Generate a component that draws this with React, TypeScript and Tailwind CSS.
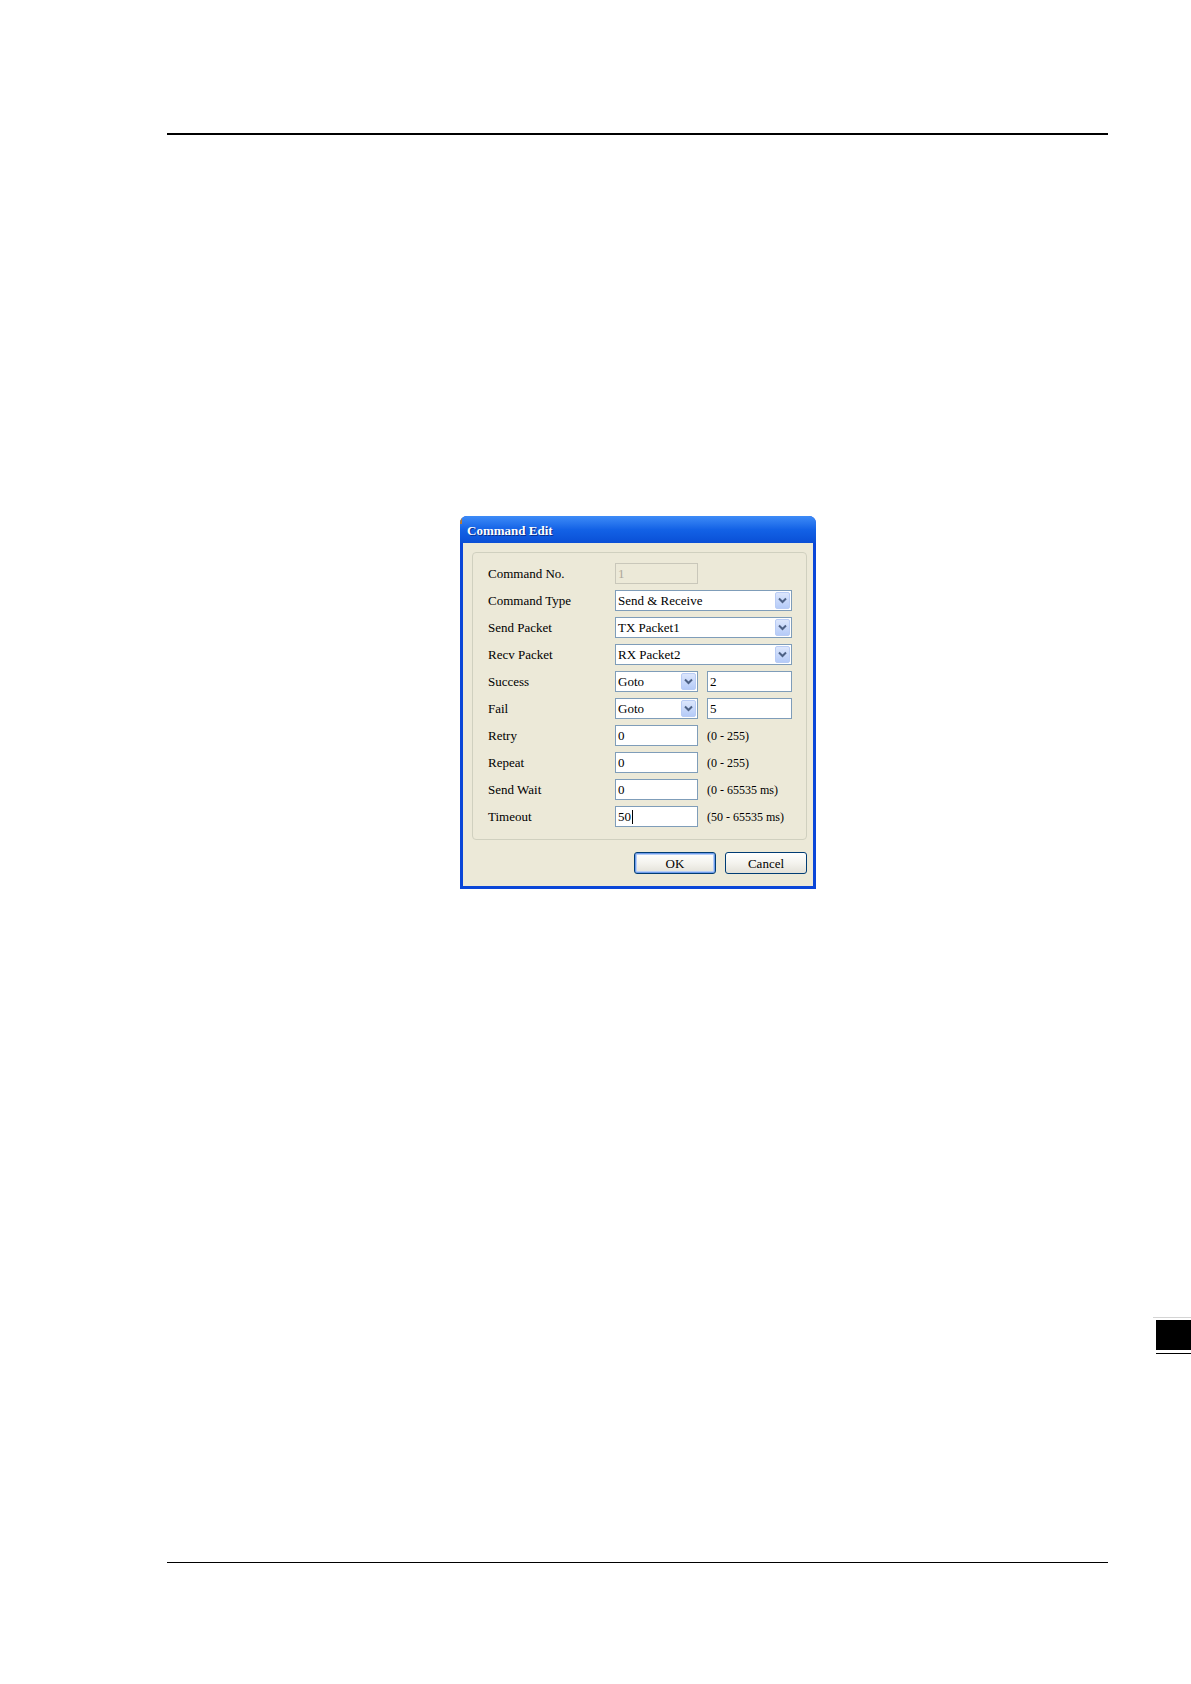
import React from "react";

const serif = { fontFamily: '"Liberation Serif", "DejaVu Serif", serif' };

function Chevron() {
  return (
    <svg width="9" height="7" viewBox="0 0 9 7">
      <path d="M1 1.5 L4.5 5 L8 1.5" fill="none" stroke="#4D6185" strokeWidth="2" />
    </svg>
  );
}

function Combo({ text, wide }: { text: string; wide?: boolean }) {
  return (
    <div
      className={`flex h-[21px] items-center border border-[#7F9DB9] bg-white ${wide ? "w-[177px]" : "w-[83px]"}`}
    >
      <span className="flex-1 pl-[2px] text-[13px] leading-none text-black">{text}</span>
      <div className="mr-[1px] flex h-[17px] w-[15px] items-center justify-center rounded-[2px] border border-[#B9CCF5] bg-gradient-to-b from-[#DCE6FC] to-[#B5CBF8]">
        <Chevron />
      </div>
    </div>
  );
}

function Input({ text, w = "w-[83px]", cursor }: { text: string; w?: string; cursor?: boolean }) {
  return (
    <div className={`flex h-[21px] items-center border border-[#7F9DB9] bg-white ${w}`}>
      <span className="pl-[2px] text-[13px] leading-none text-black">{text}</span>
      {cursor && <span className="ml-[1px] h-[14px] w-[1px] bg-black" />}
    </div>
  );
}

function Row({ label, children }: { label: string; children: React.ReactNode }) {
  return (
    <div className="flex h-[21px] items-center">
      <div className="w-[127px] text-[13px] leading-none text-black">{label}</div>
      <div className="flex items-center gap-[9px]">{children}</div>
    </div>
  );
}

function Range({ text }: { text: string }) {
  return <span className="text-[12px] leading-none text-black">{text}</span>;
}

function XPButton({ label, def }: { label: string; def?: boolean }) {
  return (
    <div
      className={`flex h-[22px] w-[82px] items-center justify-center rounded-[3px] border border-[#003C74] bg-gradient-to-b from-[#FFFFFF] via-[#F4F3EE] to-[#E3E1D8] text-[13px] leading-none text-black ${
        def ? "shadow-[inset_0_0_0_1px_#6F9CEB,inset_0_0_0_2px_#B6CEF7]" : ""
      }`}
    >
      {label}
    </div>
  );
}

export default function App() {
  return (
    <div className="relative h-[1684px] w-[1191px] overflow-hidden bg-white" style={serif}>
      <div className="pt-[133px]">
        {/* header rule */}
        <div className="ml-[167px] h-[2px] w-[941px] bg-black" />

        {/* dialog */}
        <div className="ml-[460px] mt-[381px] flex h-[373px] w-[356px] flex-col overflow-hidden rounded-t-[7px] bg-[#0A46D8]">
          {/* title bar */}
          <div className="relative flex h-[27px] items-center bg-gradient-to-b from-[#3D8BF7] via-[#1362E6] to-[#0A4FD6] pl-[7px] pt-[2px]">
            <span className="absolute left-0 top-[2px] h-[6px] w-[2px] bg-[#C07A2A]" />
            <span className="text-[13px] font-bold leading-none text-white [text-shadow:1px_1px_0_#0A2F8C]">
              Command Edit
            </span>
          </div>
          {/* body */}
          <div className="mx-[3px] mb-[3px] flex flex-1 flex-col bg-[#ECE9D8] pl-[9px] pr-[6px] pt-[9px]">
            <div className="flex h-[288px] flex-col gap-[6px] rounded-[4px] border border-[#D0D0BF] pl-[15px] pt-[10px]">
              <Row label="Command No.">
                <div className="flex h-[21px] w-[83px] items-center border border-[#C9C7BA] bg-[#ECE9D8]">
                  <span className="pl-[2px] text-[13px] leading-none text-[#ACA899]">1</span>
                </div>
              </Row>
              <Row label="Command Type">
                <Combo text="Send & Receive" wide />
              </Row>
              <Row label="Send Packet">
                <Combo text="TX Packet1" wide />
              </Row>
              <Row label="Recv Packet">
                <Combo text="RX Packet2" wide />
              </Row>
              <Row label="Success">
                <Combo text="Goto" />
                <Input text="2" w="w-[85px]" />
              </Row>
              <Row label="Fail">
                <Combo text="Goto" />
                <Input text="5" w="w-[85px]" />
              </Row>
              <Row label="Retry">
                <Input text="0" />
                <Range text="(0 - 255)" />
              </Row>
              <Row label="Repeat">
                <Input text="0" />
                <Range text="(0 - 255)" />
              </Row>
              <Row label="Send Wait">
                <Input text="0" />
                <Range text="(0 - 65535 ms)" />
              </Row>
              <Row label="Timeout">
                <Input text="50" cursor />
                <Range text="(50 - 65535 ms)" />
              </Row>
            </div>
            <div className="mt-[12px] flex justify-end gap-[9px]">
              <XPButton label="OK" def />
              <XPButton label="Cancel" />
            </div>
          </div>
        </div>

        {/* side tab */}
        <div className="mt-[428px] flex flex-col items-end">
          <div className="h-[1px] w-[38px] bg-[#D4D4D4]" />
          <div className="mt-[2px] h-[30px] w-[35px] bg-black" />
          <div className="mt-[3px] h-[1px] w-[35px] bg-black" />
        </div>

        {/* footer rule */}
        <div className="ml-[167px] mt-[208px] h-[1px] w-[941px] bg-black" />
      </div>
    </div>
  );
}
